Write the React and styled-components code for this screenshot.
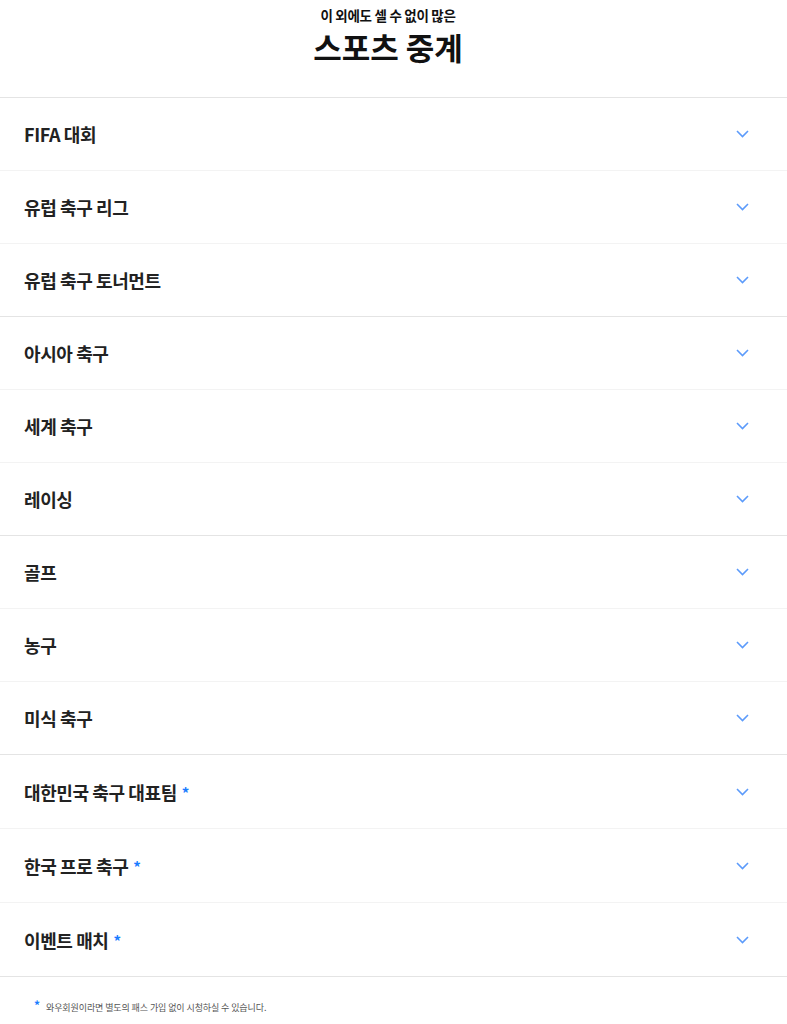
import React from 'react';
import styled, { createGlobalStyle } from 'styled-components';

const groups = [
  ['FIFA 대회', '유럽 축구 리그', '유럽 축구 토너먼트'],
  ['아시아 축구', '세계 축구', '레이싱'],
  ['골프', '농구', '미식 축구'],
  ['대한민국 축구 대표팀', '한국 프로 축구', '이벤트 매치'],
];

const Chevron = () => (
  <svg width="13" height="8" viewBox="0 0 13 8" fill="none">
    <path d="M1 1l5.5 5.5L12 1" stroke="#5c9bfb" strokeWidth="1.6" />
  </svg>
);

const App = () => {
  return (
    <>
      <GlobalStyle />
      <Page>
        <Header>
          <SubTitle>이 외에도 셀 수 없이 많은</SubTitle>
          <Title>스포츠 중계</Title>
        </Header>
        <List>
          {groups.map((group, gi) => (
            <Group key={gi}>
              {group.map((name) => (
                <Row key={name} tall={gi === 3}>
                  <Label>
                    {name}
                    {gi === 3 ? <Star>*</Star> : null}
                  </Label>
                  <Chevron />
                </Row>
              ))}
            </Group>
          ))}
        </List>
        <Note>
          <Star small>*</Star>
          와우회원이라면 별도의 패스 가입 없이 시청하실 수 있습니다.
        </Note>
      </Page>
    </>
  );
};

const GlobalStyle = createGlobalStyle`
  body {
    margin: 0;
    background: #fff;
    font-family: 'Noto Sans CJK KR', 'Noto Sans', sans-serif;
    color: #222;
  }
`;
const Page = styled.div`
  width: 787px;
`;
const Header = styled.header`
  height: 98px;
  display: flex;
  flex-direction: column;
  align-items: center;
  padding-right: 11px;
  border-bottom: 1px solid #e4e4e4;
  box-sizing: border-box;
`;
const SubTitle = styled.div`
  margin-top: 5px;
  font-size: 13.5px;
  font-weight: 700;
  line-height: 20px;
  color: #111;
  letter-spacing: -0.3px;
`;
const Title = styled.h1`
  margin: 2px 0 0;
  font-size: 31px;
  font-weight: 700;
  line-height: 40px;
  color: #111;
`;
const List = styled.div``;
const Group = styled.div`
  border-bottom: 1px solid #e4e4e4;
  & > div:last-child {
    border-bottom: none;
  }
`;
const Row = styled.div`
  height: ${(p) => (p.tall ? 73 : 72)}px;
  display: flex;
  align-items: center;
  justify-content: space-between;
  padding: 0 38px 0 24px;
  border-bottom: 1px solid #f3f3f3;
`;
const Label = styled.span`
  font-size: 18px;
  font-weight: 700;
  color: #222;
  letter-spacing: -0.4px;
`;
const Star = styled.span`
  color: #1a7cff;
  font-weight: 700;
  font-size: ${(p) => (p.small ? '12px' : '15px')};
  margin-left: ${(p) => (p.small ? '0' : '5px')};
  margin-right: ${(p) => (p.small ? '6px' : '0')};
  vertical-align: 1px;
`;
const Note = styled.p`
  margin: 20px 0 0 34px;
  font-size: 9px;
  color: #555;
  line-height: 16px;
  letter-spacing: -0.1px;
`;

export default App;
